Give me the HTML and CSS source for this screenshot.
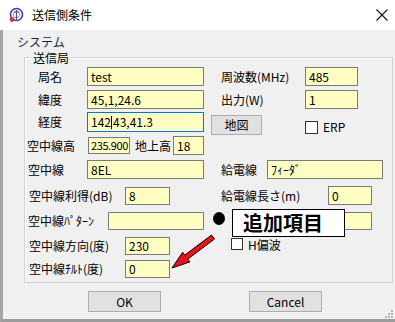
FILE: index.html
```html
<!DOCTYPE html>
<html lang="ja">
  <head>
    <meta charset="utf-8">
    <title>送信側条件</title>
    <link rel="stylesheet" href="styles.css">
  </head>
  <body>
    <div class="window">
      <div class="titlebar">
        <svg class="app-icon" viewBox="0 0 16 16">
          <circle cx="8.5" cy="7.5" r="6" fill="none" stroke="#3a3ad8" stroke-width="1.6"/>
          <circle cx="8.5" cy="7.5" r="3.2" fill="none" stroke="#8a8ae8" stroke-width="1"/>
          <line x1="8.5" y1="3" x2="8.5" y2="14" stroke="#555" stroke-width="1.2"/>
          <line x1="6" y1="5" x2="11" y2="5" stroke="#555" stroke-width="1"/>
          <circle cx="4" cy="12.5" r="2.4" fill="#e03040"/>
        </svg>
        <span class="title">送信側条件</span>
        <svg class="close" viewBox="0 0 12 12">
          <path d="M0.5 0.5 L11.5 11.5 M11.5 0.5 L0.5 11.5" stroke="#111" stroke-width="1.1"/>
        </svg>
      </div>

      <div class="client">
        <div class="sys-label">システム</div>

        <div class="group">
          <div class="legend">送信局</div>
          <div class="rows">
            <div class="row">
              <div class="cell-l">
                <span class="lbl lbl-sta">局名</span>
                <div class="edit e-long">test</div>
              </div>
              <div class="cell-r">
                <span class="lbl lbl-r">周波数(MHz)</span>
                <div class="edit e-r">485</div>
              </div>
            </div>

            <div class="row gap4">
              <div class="cell-l">
                <span class="lbl lbl-sta">緯度</span>
                <div class="edit e-long">45,1,24.6</div>
              </div>
              <div class="cell-r">
                <span class="lbl lbl-r">出力(W)</span>
                <div class="edit e-r">1</div>
              </div>
            </div>

            <div class="row gap3">
              <div class="cell-l">
                <span class="lbl lbl-sta">経度</span>
                <div class="edit e-long focused">142<span class="caret"></span>43,41.3</div>
              </div>
              <div class="cell-r">
                <button class="btn btn-map">地図</button>
                <span class="check check-erp"></span>
                <span class="check-text">ERP</span>
              </div>
            </div>

            <div class="row gap5">
              <div class="cell-l">
                <span class="lbl lbl-h">空中線高</span>
                <div class="edit e-h">235.900</div>
                <span class="lbl lbl-gh">地上高</span>
                <div class="edit e-gh">18</div>
              </div>
              <div class="cell-r"></div>
            </div>

            <div class="row gap5">
              <div class="cell-l">
                <span class="lbl lbl-ant">空中線</span>
                <div class="edit e-long">8EL</div>
              </div>
              <div class="cell-r">
                <span class="lbl lbl-feed">給電線</span>
                <div class="edit e-feed">ﾌｨｰﾀﾞ</div>
              </div>
            </div>

            <div class="row gap7">
              <div class="cell-l">
                <span class="lbl lbl-num">空中線利得(dB)</span>
                <div class="edit e-num">8</div>
              </div>
              <div class="cell-r">
                <span class="lbl lbl-len">給電線長さ(m)</span>
                <div class="edit e-len">0</div>
              </div>
            </div>

            <div class="row gap6">
              <div class="cell-l">
                <span class="lbl lbl-pat">空中線ﾊﾟﾀｰﾝ</span>
                <div class="edit e-pat"></div>
              </div>
              <div class="cell-r">
                <div class="edit e-hide"></div>
              </div>
            </div>

            <div class="row gap6">
              <div class="cell-l">
                <span class="lbl lbl-num">空中線方向(度)</span>
                <div class="edit e-num">230</div>
              </div>
              <div class="cell-r">
                <span class="check check-h"></span>
                <span class="check-text">H偏波</span>
              </div>
            </div>

            <div class="row gap4">
              <div class="cell-l">
                <span class="lbl lbl-num">空中線ﾁﾙﾄ(度)</span>
                <div class="edit e-num">0</div>
              </div>
              <div class="cell-r"></div>
            </div>
          </div>
        </div>

        <div class="buttons">
          <button class="btn btn-dlg">OK</button>
          <button class="btn btn-dlg btn-cancel">Cancel</button>
        </div>

        <!-- annotation drawn over the dialog -->
        <div class="note-dot"></div>
        <div class="note">追加項目</div>
        <svg class="note-arrow" viewBox="0 0 55 45">
          <polygon points="7,38 24.9,31.9 22.8,29.1 49.5,9 46.5,5 19.8,25.1 17.7,22.3" fill="#e8141c" stroke="#000" stroke-width="1"/>
        </svg>
        <svg class="grip" viewBox="0 0 10 10">
          <rect x="7" y="1" width="2" height="2" fill="#b5b5b5"/>
          <rect x="4" y="4" width="2" height="2" fill="#b5b5b5"/>
          <rect x="7" y="4" width="2" height="2" fill="#b5b5b5"/>
          <rect x="1" y="7" width="2" height="2" fill="#b5b5b5"/>
          <rect x="4" y="7" width="2" height="2" fill="#b5b5b5"/>
          <rect x="7" y="7" width="2" height="2" fill="#b5b5b5"/>
        </svg>
      </div>
    </div>
  </body>
</html>
```

FILE: styles.css
```css
* {
    box-sizing: border-box;
}

body {
    margin: 0;
    background: #fff;
    color: #000;
    font-family: "Noto Sans CJK JP", sans-serif;
    font-size: 12px;
}

.window {
    width: 395px;
    height: 322px;
    display: flex;
    flex-direction: column;
}

.titlebar {
    height: 30px;
    background: #fff;
    display: flex;
    align-items: center;
    padding-left: 8px;
}

.app-icon {
    width: 16px;
    height: 16px;
}

.title {
    margin-left: 8px;
    font-size: 12px;
    line-height: 14px;
}

.close {
    width: 12px;
    height: 12px;
    margin-left: auto;
    margin-right: 7px;
}

.client {
    flex: 1;
    position: relative;
    background: #f0f0f0;
    border-left: 3px solid #a6a6a6;
    border-bottom: 3px solid #9c9c9c;
}

.sys-label {
    margin: 5px 0 0 14px;
    line-height: 13px;
    color: #1c1c48;
}

.group {
    position: relative;
    width: 369px;
    margin: 9px 0 0 21px;
    border: 1px solid #d3d3d3;
    box-shadow: inset 1px 1px 0 #fff;
}

.legend {
    position: absolute;
    top: -7px;
    left: 6px;
    padding: 0 2px;
    line-height: 13px;
    background: #f0f0f0;
}

.rows {
    padding: 9px 0 4px 0;
}

.row {
    display: flex;
    height: 19px;
}

.gap3 { margin-top: 3px; }
.gap4 { margin-top: 4px; }
.gap5 { margin-top: 5px; }
.gap6 { margin-top: 6px; }
.gap7 { margin-top: 7px; }

.cell-l {
    width: 181px;
    display: flex;
    align-items: center;
}

.cell-r {
    flex: 1;
    display: flex;
    align-items: center;
}

.lbl {
    flex: none;
    line-height: 14px;
    white-space: nowrap;
}

.lbl-sta  { margin-left: 13px; width: 49px; }
.lbl-h    { margin-left: 2px;  width: 61px; }
.lbl-gh   { margin-left: 5px;  width: 38px; }
.lbl-ant  { margin-left: 3px;  width: 59px; }
.lbl-num  { margin-left: 4px;  width: 96px; }
.lbl-pat  { margin-left: 3px;  width: 80px; }
.lbl-r    { margin-left: 15px; width: 84px; }
.lbl-feed { margin-left: 15px; width: 46px; }
.lbl-len  { margin-left: 15px; width: 107px; }

.edit {
    flex: none;
    height: 19px;
    padding-left: 3px;
    line-height: 17px;
    background: #ffffc4;
    border: 1px solid #7a7a7a;
    white-space: nowrap;
    overflow: hidden;
}

.edit.focused {
    height: 20px;
    border-color: #0078d7;
}

.caret {
    display: inline-block;
    width: 1px;
    height: 13px;
    margin: 0 1px 0 0;
    vertical-align: -2px;
    background: #000;
}

.e-long { width: 117px; }
.e-h    { width: 42px; height: 17px; padding-left: 2px; font-size: 11px; letter-spacing: -0.4px; line-height: 15px; }
.e-gh   { width: 31px; }
.e-num  { width: 45px; height: 18px; line-height: 16px; }
.e-pat  { width: 96px; height: 18px; }
.e-r    { width: 53px; }
.e-feed { width: 116px; }
.e-len  { width: 44px; }
.e-hide { width: 28px; height: 18px; margin-left: 138px; }

.btn {
    font-family: "Noto Sans CJK JP", sans-serif;
    font-size: 12px;
    color: #000;
    background: #e1e1e1;
    border: 1px solid #adadad;
    padding: 0;
    line-height: 18px;
}

.btn-map {
    width: 51px;
    height: 20px;
    margin-left: 5px;
    align-self: flex-start;
    margin-top: 3px;
}

.check {
    flex: none;
    width: 13px;
    height: 13px;
    background: #fff;
    border: 1px solid #333;
}

.check-erp {
    margin-left: 43px;
    align-self: flex-start;
    margin-top: 9px;
}

.check-erp + .check-text {
    align-self: flex-start;
    margin-top: 8px;
}

.check-h {
    margin-left: 25px;
    width: 12px;
    height: 12px;
    align-self: flex-start;
    margin-top: 2px;
}

.check-h + .check-text {
    align-self: flex-start;
    margin-top: 3px;
    line-height: 12px;
}

.check-text {
    margin-left: 5px;
    line-height: 14px;
}

.buttons {
    display: flex;
    gap: 88px;
    margin: 8px 0 0 85px;
}

.btn-dlg {
    width: 73px;
    height: 21px;
}

.note-dot {
    position: absolute;
    left: 210px;
    top: 182px;
    width: 12px;
    height: 13px;
    border-radius: 50%;
    background: #000;
}

.note {
    position: absolute;
    left: 229px;
    top: 179px;
    width: 113px;
    height: 28px;
    padding-left: 10px;
    background: #fff;
    border: 1px solid #000;
    font-size: 20px;
    font-weight: 700;
    line-height: 26px;
}

.note-arrow {
    position: absolute;
    left: 162px;
    top: 200px;
    width: 55px;
    height: 45px;
}

.grip {
    position: absolute;
    left: 381px;
    top: 279px;
    width: 10px;
    height: 10px;
}
```
